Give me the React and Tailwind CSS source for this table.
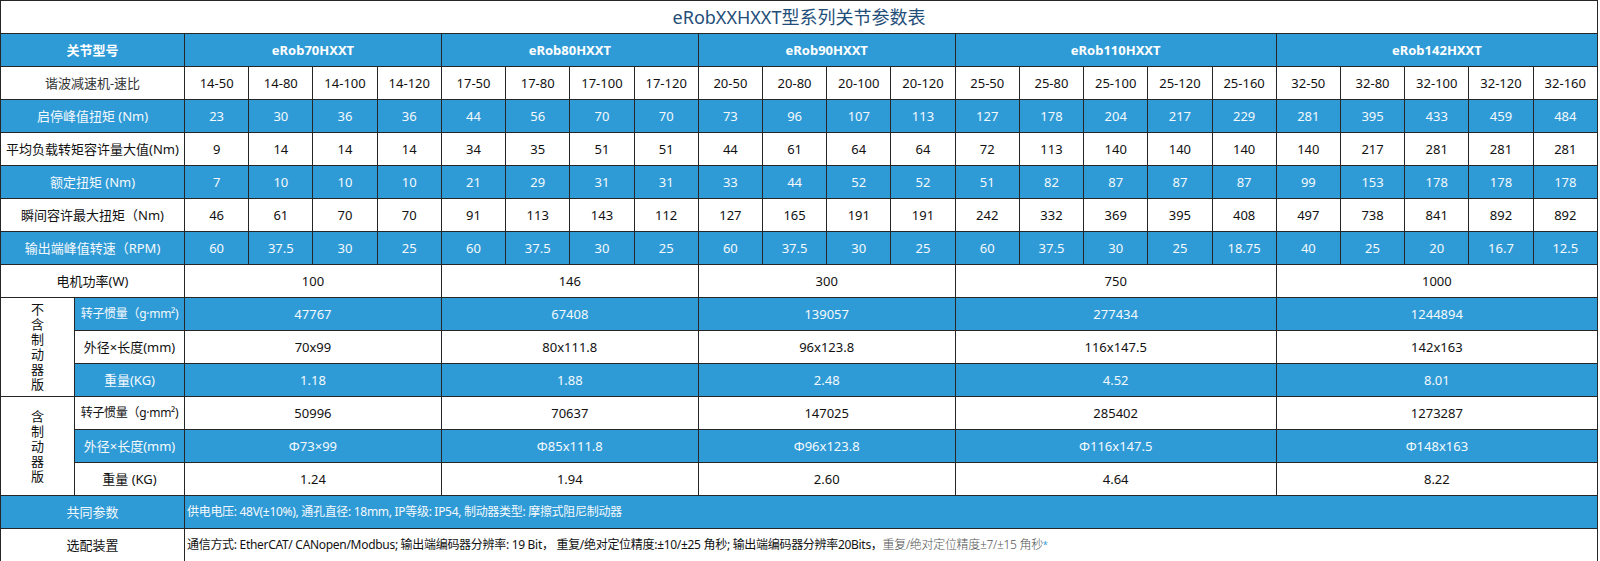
const groups = [
  { name: 'eRob70HXXT', span: 4 },
  { name: 'eRob80HXXT', span: 4 },
  { name: 'eRob90HXXT', span: 4 },
  { name: 'eRob110HXXT', span: 5 },
  { name: 'eRob142HXXT', span: 5 },
];

const ratios = ['14-50', '14-80', '14-100', '14-120', '17-50', '17-80', '17-100', '17-120', '20-50', '20-80', '20-100', '20-120', '25-50', '25-80', '25-100', '25-120', '25-160', '32-50', '32-80', '32-100', '32-120', '32-160'];

const perRatio = [
  { label: '启停峰值扭矩 (Nm)', blue: true, v: [23, 30, 36, 36, 44, 56, 70, 70, 73, 96, 107, 113, 127, 178, 204, 217, 229, 281, 395, 433, 459, 484] },
  { label: '平均负载转矩容许量大值(Nm)', v: [9, 14, 14, 14, 34, 35, 51, 51, 44, 61, 64, 64, 72, 113, 140, 140, 140, 140, 217, 281, 281, 281] },
  { label: '额定扭矩 (Nm)', blue: true, v: [7, 10, 10, 10, 21, 29, 31, 31, 33, 44, 52, 52, 51, 82, 87, 87, 87, 99, 153, 178, 178, 178] },
  { label: '瞬间容许最大扭矩（Nm)', v: [46, 61, 70, 70, 91, 113, 143, 112, 127, 165, 191, 191, 242, 332, 369, 395, 408, 497, 738, 841, 892, 892] },
  { label: '输出端峰值转速（RPM)', blue: true, v: [60, 37.5, 30, 25, 60, 37.5, 30, 25, 60, 37.5, 30, 25, 60, 37.5, 30, 25, 18.75, 40, 25, 20, 16.7, 12.5] },
];

const noBrake = [
  { label: '转子惯量（g·mm²)', small: true, blue: true, v: ['47767', '67408', '139057', '277434', '1244894'] },
  { label: '外径×长度(mm)', v: ['70x99', '80x111.8', '96x123.8', '116x147.5', '142x163'] },
  { label: '重量(KG)', blue: true, v: ['1.18', '1.88', '2.48', '4.52', '8.01'] },
];

const withBrake = [
  { label: '转子惯量（g·mm²)', small: true, v: ['50996', '70637', '147025', '285402', '1273287'] },
  { label: '外径×长度(mm)', blue: true, v: ['Φ73×99', 'Φ85x111.8', 'Φ96x123.8', 'Φ116x147.5', 'Φ148x163'] },
  { label: '重量 (KG)', v: ['1.24', '1.94', '2.60', '4.64', '8.22'] },
];

const cell = 'border border-[#262626] text-center align-middle p-0 whitespace-nowrap overflow-hidden leading-[18px]';
const tone = (blue) => (blue ? 'bg-[#2f9bd6] text-[#f4f9fd]' : 'bg-white text-[#111]');

function VText({ text }) {
  return (
    <div className="flex flex-col items-center leading-[15px]">
      {text.split('').map((c, i) => (
        <span key={i}>{c}</span>
      ))}
    </div>
  );
}

function GroupRow({ row, lead }) {
  return (
    <tr className="h-[33px]">
      {lead}
      <td className={`${cell} ${tone(row.blue)} ${row.small ? 'text-[12px] tracking-[-0.3px]' : ''}`}>{row.label}</td>
      {row.v.map((x, i) => (
        <td key={i} colSpan={groups[i].span} className={`${cell} ${tone(row.blue)}`}>
          {x}
        </td>
      ))}
    </tr>
  );
}

export default function App() {
  return (
    <div
      className="w-[1600px] h-[561px] bg-white text-[13px]"
      style={{ fontFamily: '"Noto Sans", "Noto Sans CJK SC", sans-serif' }}
    >
      <table className="table-fixed border-collapse w-[1598px]">
        <colgroup>
          <col className="w-[74px]" />
          <col className="w-[110px]" />
          {ratios.map((r) => (
            <col key={r} />
          ))}
        </colgroup>
        <tbody>
          <tr className="h-[33px]">
            <td colSpan={24} className={`${cell} bg-white text-[#1f4e79] text-[18px]`}>
              eRobXXHXXT型系列关节参数表
            </td>
          </tr>
          <tr className="h-[33px]">
            <td colSpan={2} className={`${cell} bg-[#2f9bd6] text-white font-bold`}>
              关节型号
            </td>
            {groups.map((g) => (
              <td key={g.name} colSpan={g.span} className={`${cell} bg-[#2f9bd6] text-white font-bold`}>
                {g.name}
              </td>
            ))}
          </tr>
          <tr className="h-[33px]">
            <td colSpan={2} className={`${cell} bg-white text-[#333]`}>
              谐波减速机-速比
            </td>
            {ratios.map((r) => (
              <td key={r} className={`${cell} ${tone(false)}`}>
                {r}
              </td>
            ))}
          </tr>
          {perRatio.map((row) => (
            <tr key={row.label} className="h-[33px]">
              <td colSpan={2} className={`${cell} ${tone(row.blue)}`}>
                {row.label}
              </td>
              {row.v.map((x, i) => (
                <td key={i} className={`${cell} ${tone(row.blue)}`}>
                  {x}
                </td>
              ))}
            </tr>
          ))}
          <tr className="h-[33px]">
            <td colSpan={2} className={`${cell} ${tone(false)}`}>
              电机功率(W)
            </td>
            {['100', '146', '300', '750', '1000'].map((x, i) => (
              <td key={x} colSpan={groups[i].span} className={`${cell} ${tone(false)}`}>
                {x}
              </td>
            ))}
          </tr>
          {noBrake.map((row, i) => (
            <GroupRow
              key={'n' + i}
              row={row}
              lead={
                i === 0 ? (
                  <td rowSpan={3} className={`${cell} bg-white text-[#111]`}>
                    <VText text="不含制动器版" />
                  </td>
                ) : null
              }
            />
          ))}
          {withBrake.map((row, i) => (
            <GroupRow
              key={'w' + i}
              row={row}
              lead={
                i === 0 ? (
                  <td rowSpan={3} className={`${cell} bg-white text-[#111]`}>
                    <VText text="含制动器版" />
                  </td>
                ) : null
              }
            />
          ))}
          <tr className="h-[33px]">
            <td colSpan={2} className={`${cell} ${tone(true)}`}>
              共同参数
            </td>
            <td colSpan={22} className={`${cell} ${tone(true)} text-left pl-[2px] text-[12px] tracking-[-0.3px]`}>
              供电电压: 48V(±10%), 通孔直径: 18mm, IP等级: IP54, 制动器类型: 摩擦式阻尼制动器
            </td>
          </tr>
          <tr className="h-[33px]">
            <td colSpan={2} className={`${cell} ${tone(false)}`}>
              选配装置
            </td>
            <td colSpan={22} className={`${cell} ${tone(false)} text-left pl-[2px] text-[12px] tracking-[-0.3px]`}>
              通信方式: EtherCAT/ CANopen/Modbus; 输出端编码器分辨率: 19 Bit， 重复/绝对定位精度:±10/±25 角秒; 输出端编码器分辨率20Bits，
              <span className="text-[#555] font-light">重复/绝对定位精度±7/±15 角秒</span>
              <span className="text-[#2f9bd6] text-[9px] align-top">*</span>
            </td>
          </tr>
        </tbody>
      </table>
    </div>
  );
}
